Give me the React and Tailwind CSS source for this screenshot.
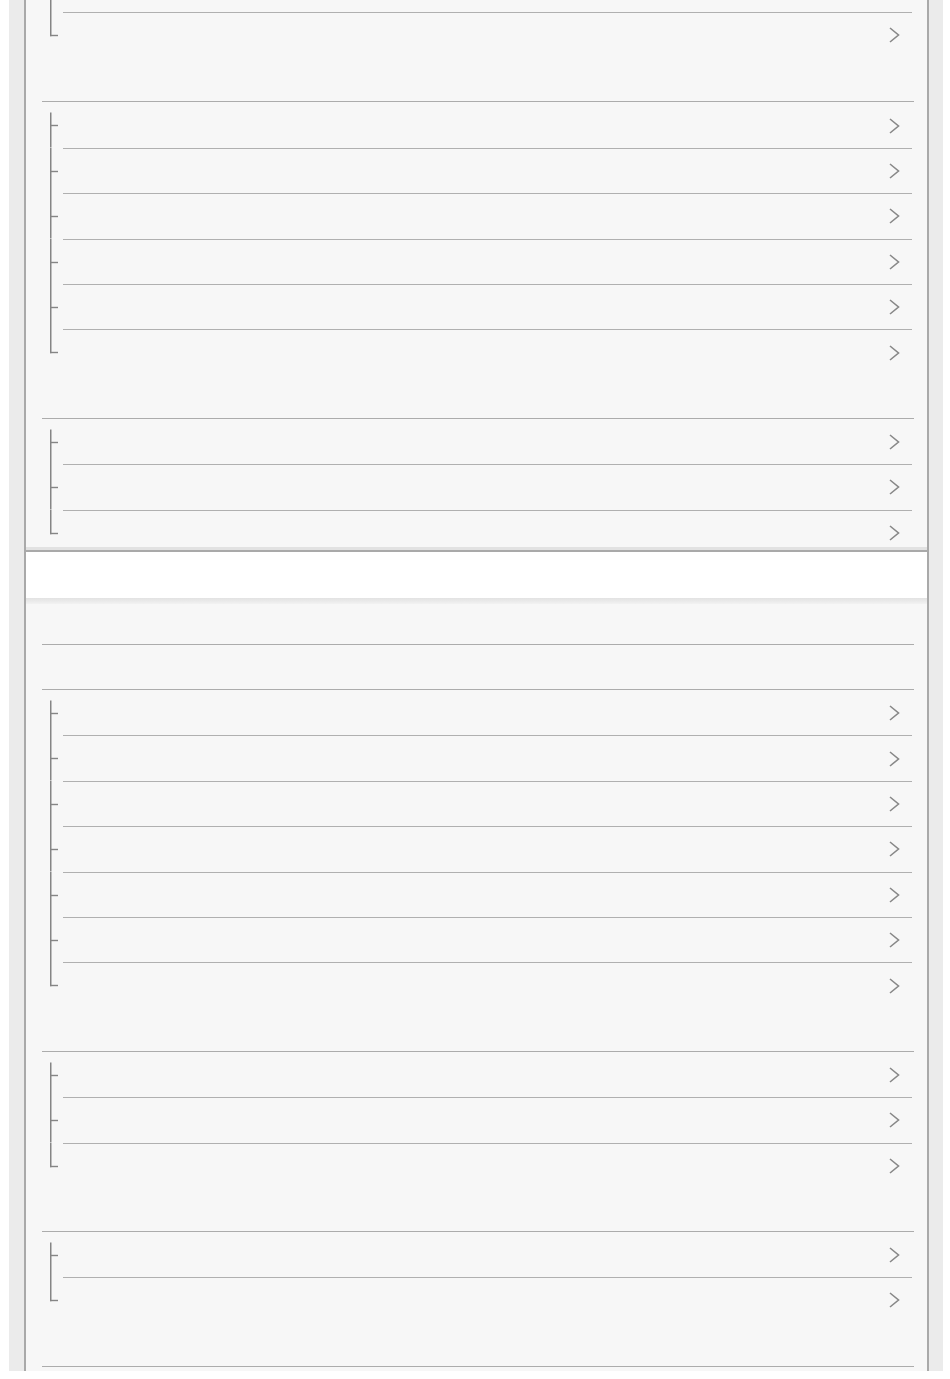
import React from "react";

// Light grey list panel: groups of tree-connected rows with a chevron on each row

const Chevron = () => (
  <svg width="11" height="16" viewBox="0 0 11 16" fill="none">
    <path d="M1 1l8.5 7L1 15" stroke="#888888" strokeWidth="1.6" />
  </svg>
);

const TreeMark = ({ first, last }) => {
  const top = first ? 10.6 : 0;
  const bottom = last ? 24.2 : 45.4;
  return (
    <svg width="21" height="45.4" viewBox="0 0 21 45.4" className="shrink-0">
      <line x1="8.75" x2="8.75" y1={top} y2={bottom} stroke="#858585" strokeWidth="1.5" />
      <line x1="8" x2="16" y1="23.5" y2="23.5" stroke="#858585" strokeWidth="1.4" />
    </svg>
  );
};

const Row = ({ first, last }) => (
  <div className="flex h-[45.4px]">
    <TreeMark first={first} last={last} />
    <div
      className={`flex flex-1 items-center justify-end mr-[2px] pr-[12px] border-t ${
        first ? "border-transparent" : "border-[#b0b0b0]"
      }`}
    >
      <Chevron />
    </div>
  </div>
);

const Group = ({ count, divider = true, first = true, className = "" }) => (
  <div className={`ml-[16px] mr-[13px] ${divider ? "border-t border-[#acacac]" : ""} ${className}`}>
    {Array.from({ length: count }).map((_, i) => (
      <Row key={i} first={first && i === 0} last={i === count - 1} />
    ))}
  </div>
);

export default function App() {
  return (
    <div className="min-h-screen bg-white">
      <div className="ml-[9px] w-[934px] h-[1371px] bg-[#ebebeb] pl-[15px] pr-[14px]">
        <div className="flex flex-col h-full border-x-2 border-[#a9a9a9] bg-[#f7f7f7]">
          {/* first panel, scrolled */}
          <div className="h-[547px] shrink-0 overflow-hidden">
            <Group count={2} divider={false} first={false} className="mt-[-33.4px]" />
            <div className="h-[44px]" />
            <Group count={6} />
            <div className="h-[43px]" />
            <Group count={3} />
          </div>

          {/* sticky header */}
          <div className="h-[3px] shrink-0 bg-[#e2e2e2]" />
          <div className="h-[2px] shrink-0 bg-[#a9a9a9]" />
          <div className="h-[46px] shrink-0 bg-white" />
          <div className="h-[6px] shrink-0 bg-gradient-to-b from-[#e2e2e2] to-[#f2f2f2]" />

          {/* second panel */}
          <div className="flex-1 overflow-hidden">
            <div className="h-[40px]" />
            <Group count={0} />
            <div className="h-[44px]" />
            <Group count={7} />
            <div className="h-[43px]" />
            <Group count={3} />
            <div className="h-[43px]" />
            <Group count={2} />
            <div className="h-[43px]" />
            <Group count={3} />
          </div>
        </div>
      </div>
    </div>
  );
}
